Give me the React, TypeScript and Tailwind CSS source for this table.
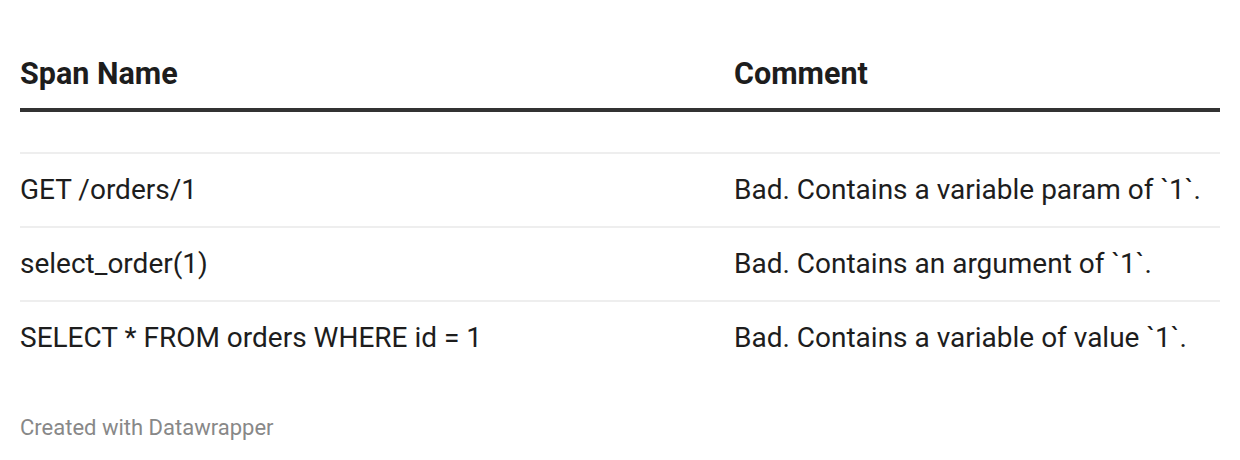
const rows = [
  { span: "GET /orders/1", comment: "Bad. Contains a variable param of `1`." },
  { span: "select_order(1)", comment: "Bad. Contains an argument of `1`." },
  { span: "SELECT * FROM orders WHERE id = 1", comment: "Bad. Contains a variable of value `1`." },
];

export default function App() {
  return (
    <div className="w-[1240px] h-[460px] bg-white px-5 pt-[56px] font-['Roboto',sans-serif] text-[#1d1d1d]">
      {/* Header */}
      <div className="flex h-[56px] items-start border-b-4 border-[#333333] text-[30.5px] font-bold leading-[36px]">
        <div className="w-[714px]">Span Name</div>
        <div className="flex-1">Comment</div>
      </div>

      {/* Empty row */}
      <div className="h-[42px] border-b-2 border-[#eeeeee]" />

      {rows.map((r, i) => (
        <div
          key={i}
          className={
            "flex items-center text-[28px] leading-[32px] " +
            (i < rows.length - 1 ? "h-[74px] border-b-2 border-[#eeeeee]" : "h-[72px]")
          }
        >
          <div className="w-[714px]">{r.span}</div>
          <div className="flex-1">{r.comment}</div>
        </div>
      ))}

      <div className="mt-[41px] text-[22px] leading-[26px] text-[#888888]">Created with Datawrapper</div>
    </div>
  );
}
